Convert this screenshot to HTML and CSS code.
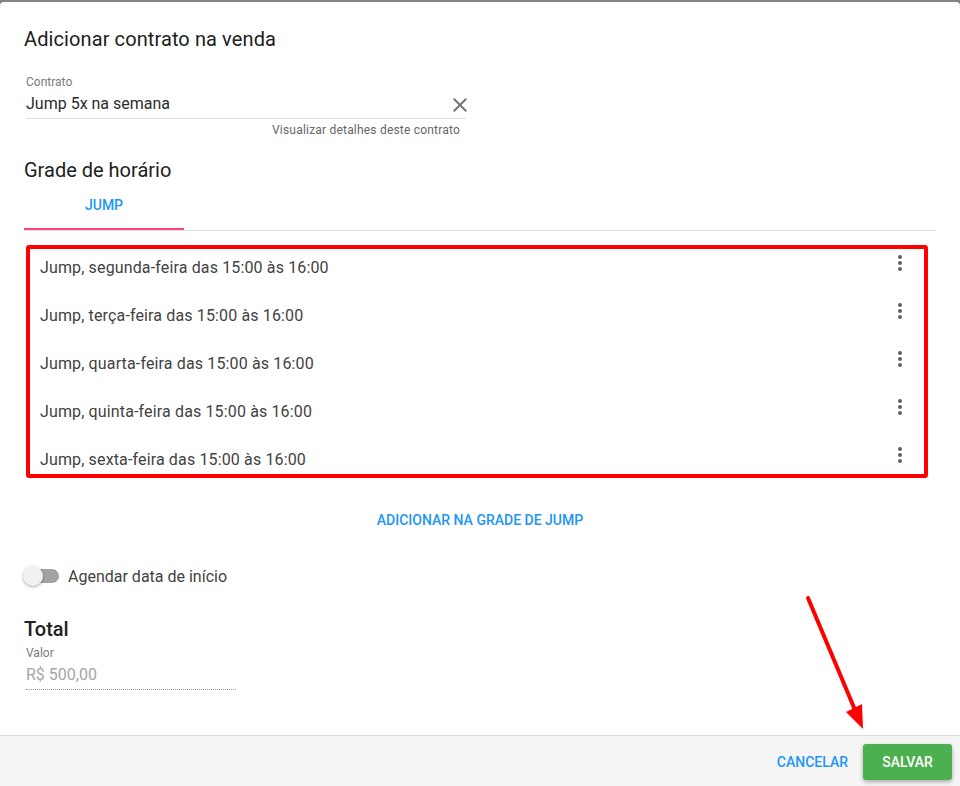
FILE: index.html
```html
<!DOCTYPE html>
<html lang="pt-BR">
<head>
<meta charset="utf-8">
<title>Adicionar contrato na venda</title>
<link rel="stylesheet" href="styles.css">
</head>
<body>
<div class="dialog">
  <div class="content">
    <h2 class="title">Adicionar contrato na venda</h2>

    <div class="field">
      <div class="field-label">Contrato</div>
      <div class="field-input">
        <span class="field-value">Jump 5x na semana</span>
        <svg class="close-icon" viewBox="0 0 24 24" width="24" height="24"><path d="M19 6.41L17.59 5 12 10.59 6.41 5 5 6.41 10.59 12 5 17.59 6.41 19 12 13.41 17.59 19 19 17.59 13.41 12z" fill="#757575"/></svg>
      </div>
      <div class="field-help">Visualizar detalhes deste contrato</div>
    </div>

    <h2 class="section-title">Grade de horário</h2>
    <div class="tabs">
      <div class="tab active">JUMP</div>
    </div>

    <div class="schedule">
      <div class="row"><span>Jump, segunda-feira das 15:00 às 16:00</span><svg class="more" viewBox="0 0 24 24" width="24" height="24"><circle cx="12" cy="6" r="2"/><circle cx="12" cy="12" r="2"/><circle cx="12" cy="18" r="2"/></svg></div>
      <div class="row"><span>Jump, terça-feira das 15:00 às 16:00</span><svg class="more" viewBox="0 0 24 24" width="24" height="24"><circle cx="12" cy="6" r="2"/><circle cx="12" cy="12" r="2"/><circle cx="12" cy="18" r="2"/></svg></div>
      <div class="row"><span>Jump, quarta-feira das 15:00 às 16:00</span><svg class="more" viewBox="0 0 24 24" width="24" height="24"><circle cx="12" cy="6" r="2"/><circle cx="12" cy="12" r="2"/><circle cx="12" cy="18" r="2"/></svg></div>
      <div class="row"><span>Jump, quinta-feira das 15:00 às 16:00</span><svg class="more" viewBox="0 0 24 24" width="24" height="24"><circle cx="12" cy="6" r="2"/><circle cx="12" cy="12" r="2"/><circle cx="12" cy="18" r="2"/></svg></div>
      <div class="row"><span>Jump, sexta-feira das 15:00 às 16:00</span><svg class="more" viewBox="0 0 24 24" width="24" height="24"><circle cx="12" cy="6" r="2"/><circle cx="12" cy="12" r="2"/><circle cx="12" cy="18" r="2"/></svg></div>
      <div class="annotation-box"></div>
    </div>

    <div class="add-row">
      <button class="text-btn">ADICIONAR NA GRADE DE JUMP</button>
    </div>

    <div class="toggle-row">
      <span class="switch"><span class="track"></span><span class="thumb"></span></span>
      <span class="toggle-label">Agendar data de início</span>
    </div>

    <h2 class="total-title">Total</h2>
    <div class="value-field">
      <div class="value-label">Valor</div>
      <div class="value-input">R$ 500,00</div>
    </div>
  </div>

  <div class="footer">
    <button class="text-btn cancel">CANCELAR</button>
    <button class="save-btn">SALVAR</button>
  </div>
</div>

<svg class="arrow" viewBox="0 0 960 786" width="960" height="786">
  <line x1="808" y1="598" x2="855" y2="710" stroke="#ff0000" stroke-width="4" stroke-linecap="round"/>
  <polygon points="846,712 862,704 863,729" fill="#ff0000"/>
</svg>
</body>
</html>
```
FILE: styles.css
```css
* { box-sizing: border-box; }

html, body {
  margin: 0;
  padding: 0;
}

body {
  position: relative;
  width: 960px;
  height: 786px;
  overflow: hidden;
  background: #848484;
  font-family: Roboto, "Liberation Sans", Arial, sans-serif;
  color: #212121;
}

.dialog {
  margin-top: 2px;
  height: 784px;
  background: #ffffff;
  border-radius: 4px 4px 0 0;
  display: flex;
  flex-direction: column;
}

.content {
  flex: 1;
  padding: 25px 24px 0 24px;
}

.title {
  margin: 0;
  font-size: 20px;
  line-height: 24px;
  font-weight: 400;
  letter-spacing: 0.1px;
  color: #212121;
}

.field {
  margin: 23px 0 0 2px;
  width: 440px;
}

.field-label {
  font-size: 12px;
  line-height: 16px;
  color: #7a7a7a;
}

.field-input {
  height: 29px;
  display: flex;
  align-items: center;
  justify-content: space-between;
  border-bottom: 1px solid #e0e0e0;
  padding-bottom: 1px;
}

.field-value {
  font-size: 16px;
  color: #2b2b2b;
}

.close-icon {
  margin-right: -6px;
  margin-top: 2px;
}

.field-help {
  margin-top: 3px;
  padding-right: 6px;
  text-align: right;
  font-size: 12px;
  line-height: 16px;
  letter-spacing: 0.2px;
  color: #666666;
}

.section-title {
  margin: 20px 0 0 0;
  font-size: 20px;
  line-height: 24px;
  font-weight: 400;
  color: #212121;
}

.tabs {
  display: flex;
  border-bottom: 1px solid #e0e0e0;
}

.tab {
  width: 160px;
  height: 48px;
  line-height: 46px;
  text-align: center;
  font-size: 14px;
  font-weight: 500;
  color: #2196f3;
}

.tab.active {
  border-bottom: 2px solid #ff4081;
}

.schedule {
  position: relative;
  margin-top: 12px;
}

.row {
  height: 48px;
  display: flex;
  align-items: center;
  justify-content: space-between;
  padding: 0 24px 0 16px;
  font-size: 16px;
  letter-spacing: 0.14px;
  color: #424242;
}

.more {
  fill: #616161;
  margin-top: -8px;
}

.annotation-box {
  position: absolute;
  top: 2px;
  left: 2px;
  width: 902px;
  height: 233px;
  border: 4px solid #ff0000;
  border-radius: 3px;
  pointer-events: none;
}

.add-row {
  margin-top: 19px;
  display: flex;
  justify-content: center;
}

.text-btn {
  height: 36px;
  padding: 0 16px;
  border: none;
  background: transparent;
  font-family: Roboto, "Liberation Sans", Arial, sans-serif;
  font-size: 14px;
  font-weight: 500;
  color: #2196f3;
}

.toggle-row {
  margin-top: 26px;
  height: 24px;
  display: flex;
  align-items: center;
}

.switch {
  position: relative;
  width: 36px;
  height: 20px;
  margin-left: -1px;
}

.track {
  position: absolute;
  left: 4px;
  top: 3px;
  width: 32px;
  height: 14px;
  border-radius: 7px;
  background: #a3a3a3;
}

.thumb {
  position: absolute;
  left: 0;
  top: 0;
  width: 20px;
  height: 20px;
  border-radius: 50%;
  background: #f1f1f1;
  box-shadow: 0 1px 3px rgba(0, 0, 0, 0.35);
}

.toggle-label {
  margin-left: 9px;
  font-size: 16px;
  color: #424242;
}

.total-title {
  margin: 29px 0 0 0;
  font-size: 20px;
  line-height: 24px;
  font-weight: 500;
  color: #212121;
}

.value-field {
  margin: 5px 0 0 2px;
  width: 210px;
}

.value-label {
  font-size: 12px;
  line-height: 14px;
  color: #7a7a7a;
}

.value-input {
  margin-top: 5px;
  font-size: 16px;
  line-height: 20px;
  padding-bottom: 4px;
  color: #a6a6a6;
  border-bottom: 1px dotted #9e9e9e;
}

.footer {
  height: 51px;
  border-top: 1px solid #dcdcdc;
  background: #f5f5f5;
  display: flex;
  justify-content: flex-end;
  align-items: flex-start;
  padding: 8px 8px 0 0;
}

.cancel {
  padding: 0 8px;
  margin-right: 7px;
}

.save-btn {
  width: 89px;
  height: 36px;
  border: none;
  border-radius: 3px;
  background: #4caf50;
  color: #ffffff;
  font-family: Roboto, "Liberation Sans", Arial, sans-serif;
  font-size: 14px;
  font-weight: 500;
  box-shadow: 0 2px 4px rgba(0, 0, 0, 0.3);
}

.arrow {
  position: absolute;
  top: 0;
  left: 0;
  pointer-events: none;
}
```
